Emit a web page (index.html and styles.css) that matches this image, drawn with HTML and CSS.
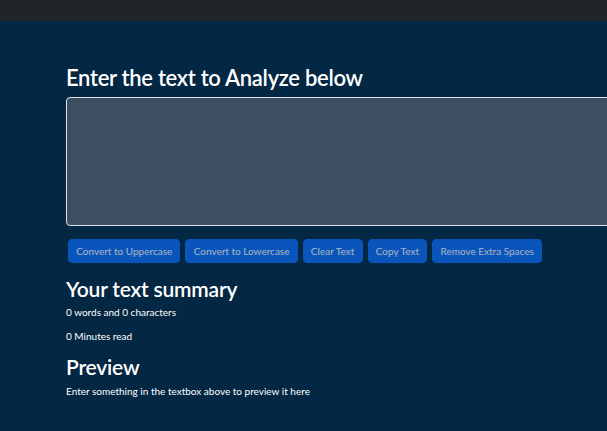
FILE: index.html
```html
<!DOCTYPE html>
<html lang="en">
<head>
<meta charset="utf-8">
<title>TextUtils</title>
<link rel="stylesheet" href="styles.css">
</head>
<body>
<nav class="navbar"></nav>
<main class="container">
  <h1 class="title">Enter the text to Analyze below</h1>
  <textarea class="textbox" rows="8"></textarea>
  <div class="actions">
    <button class="btn" disabled>Convert to Uppercase</button>
    <button class="btn" disabled>Convert to Lowercase</button>
    <button class="btn" disabled>Clear Text</button>
    <button class="btn" disabled>Copy Text</button>
    <button class="btn" disabled>Remove Extra Spaces</button>
  </div>
  <h2 class="subtitle">Your text summary</h2>
  <p class="info">0 words and 0 characters</p>
  <p class="info">0 Minutes read</p>
  <h2 class="subtitle preview-title">Preview</h2>
  <p class="info">Enter something in the textbox above to preview it here</p>
</main>
</body>
</html>
```
FILE: styles.css
```css
html, body {
  margin: 0;
  padding: 0;
  overflow: hidden;
  height: 100%;
}
body {
  background: #042743;
  color: #ffffff;
  font-family: "Lato", "Open Sans", sans-serif;
}
.navbar {
  height: 21px;
  background: #212529;
}
.container {
  padding: 43px 0 0 66px;
}
.title {
  margin: 0 0 5px 0;
  font-size: 22px;
  line-height: 28px;
  font-weight: 600;
  letter-spacing: -0.3px;
}
.textbox {
  display: block;
  box-sizing: border-box;
  width: 600px;
  height: 129px;
  margin: 0;
  background: #3c4e5f;
  border: 1px solid #dee2e6;
  border-radius: 4px;
  resize: none;
}
.actions {
  display: flex;
  gap: 5px;
  margin: 13px 0 0 2px;
}
.btn {
  height: 24px;
  padding: 0 7.2px;
  border: 1px solid #0d6efd;
  border-radius: 4px;
  background: #0d6efd;
  color: #ffffff;
  font-family: inherit;
  font-size: 10px;
  opacity: 0.65;
}
.subtitle {
  margin: 13.1px 0 3.5px 0;
  font-size: 21px;
  line-height: 25px;
  font-weight: 600;
  letter-spacing: -0.2px;
}
.preview-title {
  margin-top: 10.1px;
  margin-bottom: 4.2px;
}
.info {
  margin: 0 0 9.7px 0;
  font-size: 10px;
  line-height: 15px;
}
```
